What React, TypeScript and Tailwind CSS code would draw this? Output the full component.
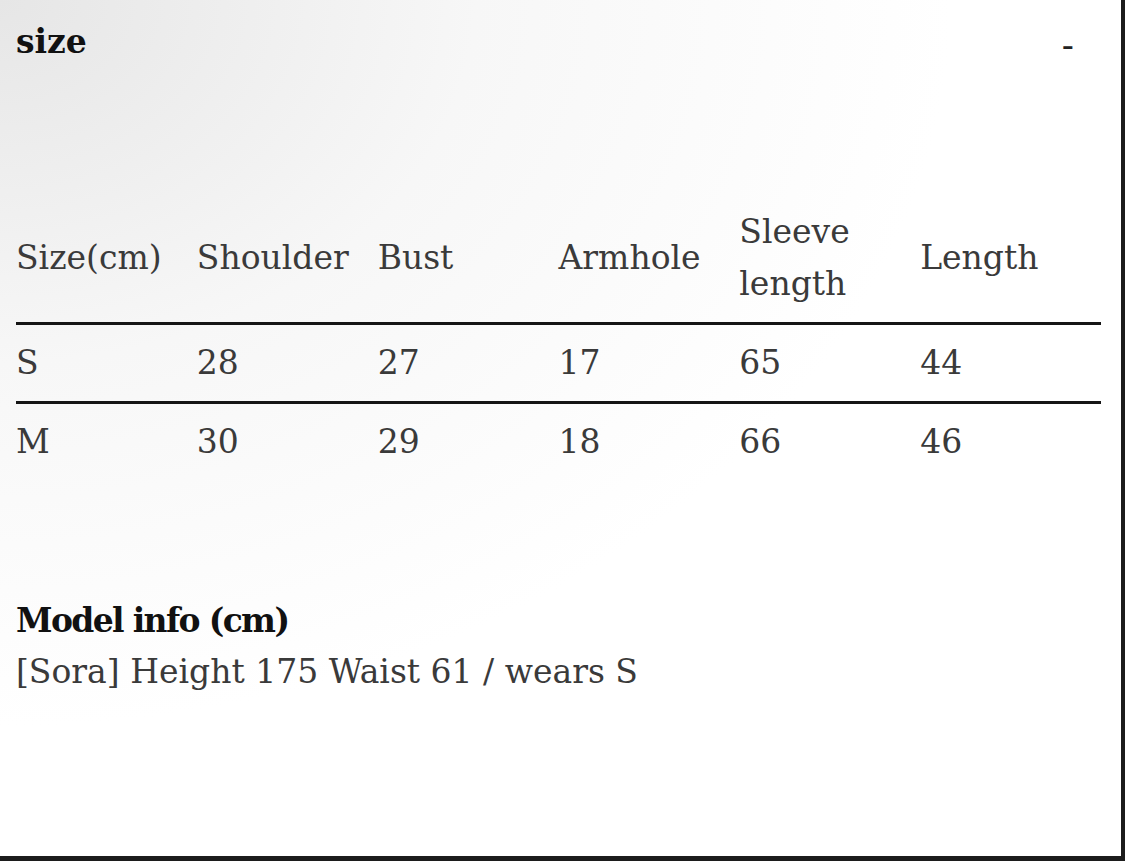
import React from 'react';

const headers = ['Size(cm)', 'Shoulder', 'Bust', 'Armhole', 'Sleeve length', 'Length'];

const rows = [
  ['S', '28', '27', '17', '65', '44'],
  ['M', '30', '29', '18', '66', '46'],
];

const App = () => {
  return (
    <div
      className="h-[861px] w-full border-r-4 border-b-[5px] border-[#1c1c1c] bg-[radial-gradient(ellipse_at_top_left,#e6e6e6_0%,#f7f7f7_30%,#ffffff_60%)] text-[33px] text-[#3a3a3a]"
      style={{ fontFamily: '"DejaVu Serif", serif' }}
    >
      <div className="pl-4 pr-5 pt-[14px]">
        <div className="flex items-center justify-between leading-[50px]">
          <h2 className="font-bold text-[#111]">size</h2>
          <span className="mr-[27px] pt-[6px] text-[36px] text-[#222]">-</span>
        </div>

        <table className="mt-[124px] w-full table-fixed border-collapse text-left leading-[52px]">
          <thead>
            <tr className="border-b-[3px] border-[#151515]">
              {headers.map((h) => (
                <th key={h} className="py-3 pr-2 align-middle font-normal">
                  {h}
                </th>
              ))}
            </tr>
          </thead>
          <tbody>
            {rows.map((r, i) => (
              <tr key={r[0]} className={i === 0 ? 'border-b-[3px] border-[#151515]' : ''}>
                {r.map((c, j) => (
                  <td key={j} className="py-3 pr-2 align-middle">
                    {c}
                  </td>
                ))}
              </tr>
            ))}
          </tbody>
        </table>

        <div className="mt-[115px] leading-[51px]">
          <div className="font-bold text-[#111] tracking-[-0.05em]">Model info (cm)</div>
          <div>[Sora] Height 175 Waist 61 / wears S</div>
        </div>
      </div>
    </div>
  );
};

export default App;
